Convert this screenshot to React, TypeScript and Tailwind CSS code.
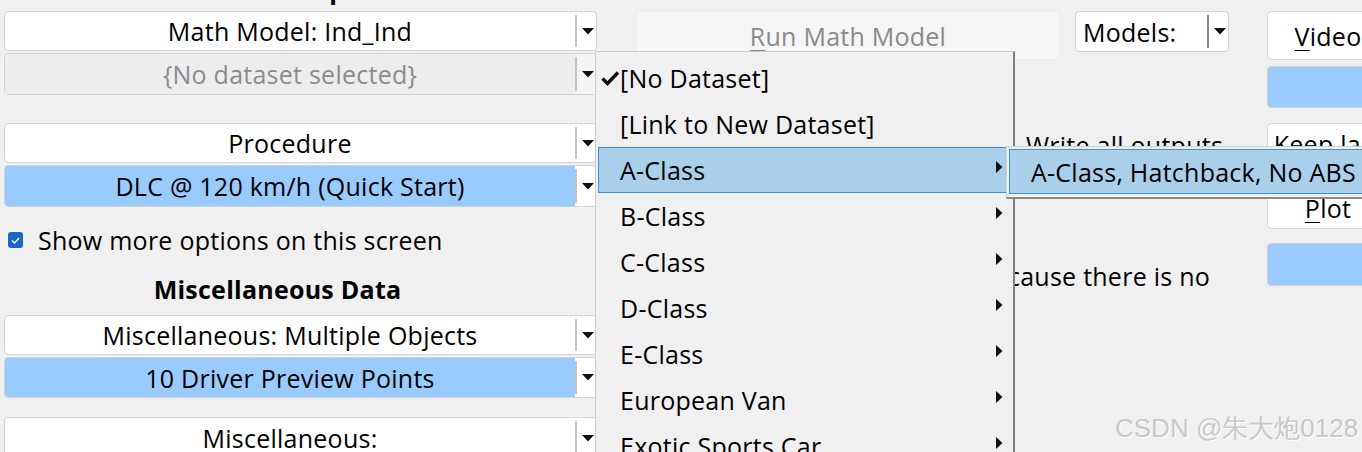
import clsx from 'clsx';

// Small down-pointing triangle used by every combo box
const DownArrow = () => (
  <svg width="12" height="7" viewBox="0 0 12 7" className="block">
    <path d="M0 0 H12 L6 6.5 Z" fill="#111" />
  </svg>
);

const RightArrow = () => (
  <svg width="7" height="12" viewBox="0 0 7 12" className="block">
    <path d="M0 0 L6.5 6 L0 12 Z" fill="#111" />
  </svg>
);

type Tone = 'white' | 'blue' | 'gray';

const Combo = ({ label, tone = 'white', h = 'h-[40px]' }: { label: string; tone?: Tone; h?: string }) => (
  <div className={clsx('flex shrink-0 overflow-hidden rounded-[4px] border border-[#d3d3d3] bg-white', h)}>
    <div
      className={clsx(
        'flex flex-1 items-center justify-center whitespace-nowrap',
        tone === 'blue' && 'bg-[#99cbfe]',
        tone === 'gray' && 'bg-[#ededed] text-[#8c8c8c]'
      )}
    >
      {label}
    </div>
    <div className={clsx('flex w-[21px] items-center justify-center py-[3px]', tone === 'gray' && 'bg-[#f4f4f4]')}>
      <div className="flex h-full w-full items-center justify-center border-l-2 border-[#c4c4c4] pl-[2px]">
        <DownArrow />
      </div>
    </div>
  </div>
);

const menuItems = [
  { label: '[No Dataset]', checked: true },
  { label: '[Link to New Dataset]' },
  { label: 'A-Class', sub: true, active: true },
  { label: 'B-Class', sub: true },
  { label: 'C-Class', sub: true },
  { label: 'D-Class', sub: true },
  { label: 'E-Class', sub: true },
  { label: 'European Van', sub: true },
  { label: 'Exotic Sports Car', sub: true },
];

function App() {
  return (
    <div className="relative flex h-[452px] w-[1362px] items-start overflow-hidden bg-[#f0f0f0] pl-[4px] pt-[11px] font-['Open_Sans',sans-serif] text-[25px] leading-[32px] tracking-[0.25px] text-black">
      {/* Left column */}
      <div className="flex w-[593px] shrink-0 flex-col">
        <div className="-mt-[40px] flex h-[40px] shrink-0 justify-center pl-[10px] font-bold leading-[37px] whitespace-nowrap">
          Simulated Test Specifications
        </div>
        <Combo label="Math Model: Ind_Ind" />
        <div className="mt-[2px]">
          <Combo label="{No dataset selected}" tone="gray" h="h-[42px]" />
        </div>
        <div className="mt-[28px]">
          <Combo label="Procedure" />
        </div>
        <div className="mt-[2px]">
          <Combo label="DLC @ 120 km/h (Quick Start)" tone="blue" h="h-[42px]" />
        </div>
        <div className="mt-[16px] flex h-[34px] items-center gap-[15px] pl-[4px]">
          <div className="flex h-[16px] w-[15px] items-center justify-center rounded-[3px] bg-[#1a67c4]">
            <svg width="9" height="7" viewBox="0 0 9 7">
              <path d="M1 3.5 L3.5 6 L8 1" fill="none" stroke="#fff" strokeWidth="1.3" />
            </svg>
          </div>
          <span className="whitespace-nowrap">Show more options on this screen</span>
        </div>
        <div className="mt-[15px] flex h-[34px] items-center justify-center pr-[46px] font-bold">Miscellaneous Data</div>
        <div className="mt-[9px]">
          <Combo label="Miscellaneous: Multiple Objects" />
        </div>
        <div className="mt-[2px]">
          <Combo label="10 Driver Preview Points" tone="blue" h="h-[41px]" />
        </div>
        <div className="mt-[19px]">
          <Combo label="Miscellaneous:" h="h-[42px]" />
        </div>
      </div>

      {/* Middle column */}
      <div className="ml-[39px] flex w-[593px] shrink-0 flex-col">
        <div className="flex items-start">
          <div className="flex h-[49px] w-[424px] items-center justify-center rounded-[5px] border border-[#ececec] bg-[#f6f6f6] text-[#8a8a8a]">
            <span>
              <span className="underline decoration-1 underline-offset-[4px]">R</span>un Math Model
            </span>
          </div>
          <div className="ml-[15px] flex h-[41px] w-[154px] overflow-hidden rounded-[4px] border border-[#d3d3d3] bg-white">
            <div className="flex flex-1 items-center pl-[7px]">Models:</div>
            <div className="flex w-[21px] items-center justify-center py-[3px]">
              <div className="flex h-full w-full items-center justify-center border-l-2 border-[#8a8a8a] pl-[2px]">
                <DownArrow />
              </div>
            </div>
          </div>
        </div>
        <div className="mt-[69px] pl-[390px] whitespace-nowrap">Write all outputs</div>
        <div className="mt-[99px] flex w-[574px] justify-end whitespace-nowrap">
          Animation is not available because there is no
        </div>
      </div>

      {/* Right column */}
      <div className="ml-[38px] flex w-[122px] shrink-0 flex-col">
        <div className="flex h-[49px] items-center justify-center rounded-[5px] border border-[#d6d6d6] bg-white">
          <span>
            <span className="underline decoration-1 underline-offset-[4px]">V</span>ideo
          </span>
        </div>
        <div className="mt-[6px] h-[42px] rounded-[4px] border border-[#d3d3d3] bg-[#99cbfe]" />
        <div className="mt-[15px] flex h-[106px] flex-col items-center justify-center rounded-[5px] border border-[#d6d6d6] bg-white text-center">
          <span className="whitespace-nowrap">Keep last</span>
          <span className="whitespace-nowrap">run</span>
          <span>
            <span className="underline decoration-1 underline-offset-[4px]">P</span>lot
          </span>
        </div>
        <div className="mt-[14px] h-[43px] rounded-[4px] border border-[#d3d3d3] bg-[#99cbfe]" />
      </div>

      {/* Popup menu */}
      <div className="absolute left-[595px] top-[51px] h-[420px] w-[420px] border-l border-t border-[#cccccc] border-r-2 border-r-[#808080] bg-[#f0f0f0] pl-[2px] pr-[6px] pt-[3px]">
        {menuItems.map((item) => (
          <div
            key={item.label}
            className={clsx(
              'relative flex h-[46px] items-center border pl-[21px] pr-[3px] whitespace-nowrap',
              item.active ? 'border-[#3d8fe2] bg-[#aacfea]' : 'border-transparent'
            )}
          >
            {item.checked && (
              <svg width="19" height="15" viewBox="0 0 19 15" className="absolute left-[2px] top-[15px]">
                <path d="M1.5 7.5 L6.5 12.5 L17 1.5" fill="none" stroke="#111" strokeWidth="3.4" />
              </svg>
            )}
            <span className="flex-1">{item.label}</span>
            {item.sub && (
              <span className="-mt-[6px]">
                <RightArrow />
              </span>
            )}
          </div>
        ))}
      </div>

      {/* Submenu */}
      <div className="absolute left-[1006px] top-[146px] h-[53px] w-[400px] border-l border-t border-[#d0d0d0] border-b-2 border-b-[#8a8a8a] bg-[#f0f0f0] p-[2px]">
        <div className="flex h-[45px] items-center border border-[#3d8fe2] bg-[#aacfea] pl-[21px] whitespace-nowrap">
          A-Class, Hatchback, No ABS
        </div>
      </div>

      {/* Watermark */}
      <div className="absolute left-[1115px] top-[412px] font-['Liberation_Sans',sans-serif] text-[26px] leading-[32px] tracking-normal text-[#c9c9c9] whitespace-nowrap [text-shadow:1px_1px_0_#ffffff]">
        CSDN @朱大炮0128
      </div>
    </div>
  );
}

export default App;
